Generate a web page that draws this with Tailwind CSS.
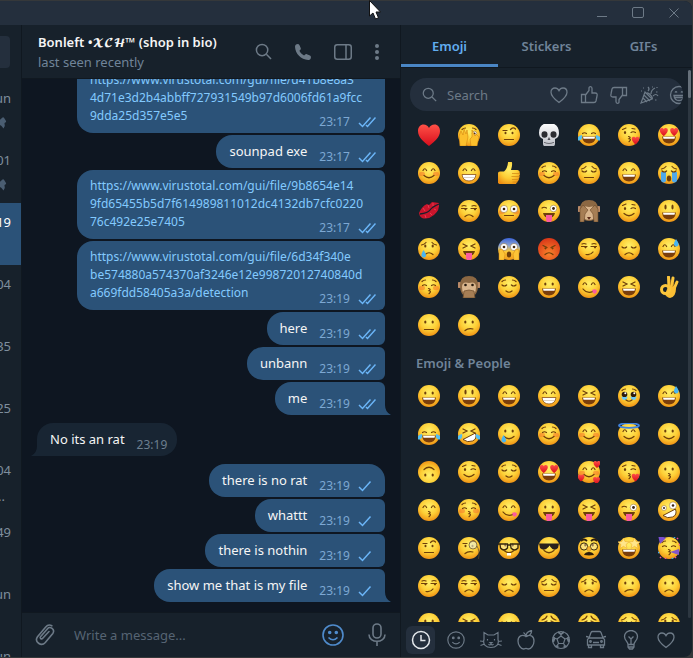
<!DOCTYPE html>
<html lang="en">
<head>
  <meta charset="UTF-8">
  <meta name="viewport" content="width=device-width, initial-scale=1.0">
  <title>Bonleft</title>
  <script src="https://cdn.jsdelivr.net/npm/@tailwindcss/browser@4"></script>
</head>
<body class="h-screen overflow-hidden bg-[#35383a] pt-px pr-px pb-px font-['Noto_Sans','Open_Sans',sans-serif] text-[13px] leading-[18px] text-[#f5f5f5]">

  <!-- shared shapes -->
  <svg width="0" height="0" class="absolute">
    <defs>
      <radialGradient id="skin" cx="50%" cy="35%" r="68%">
        <stop offset="0" stop-color="#fff06a"/>
        <stop offset=".55" stop-color="#fdce35"/>
        <stop offset="1" stop-color="#ee8d12"/>
      </radialGradient>
      <radialGradient id="rage" cx="50%" cy="70%" r="70%">
        <stop offset="0" stop-color="#f9832b"/>
        <stop offset="1" stop-color="#d93618"/>
      </radialGradient>
      <linearGradient id="scared" x1="0" y1="0" x2="0" y2="1">
        <stop offset="0" stop-color="#3b64d8"/>
        <stop offset=".35" stop-color="#8fa6d0"/>
        <stop offset=".6" stop-color="#fbc93a"/>
        <stop offset="1" stop-color="#f0981a"/>
      </linearGradient>
      <linearGradient id="red" x1="0" y1="0" x2="0" y2="1">
        <stop offset="0" stop-color="#ff5147"/>
        <stop offset="1" stop-color="#d80d1c"/>
      </linearGradient>
      <linearGradient id="bone" x1="0" y1="0" x2="0" y2="1">
        <stop offset="0" stop-color="#ffffff"/>
        <stop offset="1" stop-color="#b9bcc4"/>
      </linearGradient>
    </defs>
    <symbol id="check" viewBox="0 0 18 12"><path d="M1 7l3.500 3.500L12.500 1.500" fill="none" stroke="#6bb5f7" stroke-width="1.500"/></symbol>
    <symbol id="checks" viewBox="0 0 18 12"><path d="M1 7l3.500 3.500L12.500 1.500M8 9l1.500 1.500L17.500 1.500" fill="none" stroke="#6bb5f7" stroke-width="1.500"/></symbol>
    <symbol id="pin" viewBox="0 0 8 12"><path d="M0 3.500L3.500.5q1-.5 1.500.3l2 3.200q.4 1-.6 1.500L5.500 6l.3 3-1.300 2.500L2.500 9 0 7.500z" fill="#4a5d71"/></symbol>
    <symbol id="search" viewBox="0 0 18 18"><circle cx="7.500" cy="7.500" r="6"/><path d="M12 12l5 5"/></symbol>
    <symbol id="heart" viewBox="0 0 20 20"><path d="M10 17.500C6 14.500 2 11 2 7.200 2 4.500 3.800 3 6 3c1.800 0 3.200 1 4 2.600C10.800 4 12.200 3 14 3c2.200 0 4 1.500 4 4.200 0 3.800-4 7.300-8 10.300z"/></symbol>
    <symbol id="thumb" viewBox="0 0 20 20"><path d="M2.500 9.500h4v8h-4zM6.500 10l3.500-4.500V3c0-2 3-2 3 .5V8h3c2 0 2.500 1 2 3l-1 5c-.4 1.200-1 1.500-2 1.500H6.500"/></symbol>
    <symbol id="smile" viewBox="0 0 22 22"><circle cx="11" cy="11" r="10"/><path d="M6.500 13.500q4.500 4.500 9 0"/><circle cx="7.700" cy="8.500" r="1" fill="currentColor"/><circle cx="14.300" cy="8.500" r="1" fill="currentColor"/></symbol>
  </svg>

  <div class="flex h-full flex-col overflow-hidden rounded-tr-lg rounded-br-lg bg-[#17212b]">

    <!-- window title bar -->
    <header class="flex h-6 shrink-0 justify-end bg-[#242f3d] text-[#6d7a87]">
      <button class="flex w-9 items-center justify-center"><svg width="12" height="12" fill="none" stroke="currentColor"><path d="M1 9.500h10"/></svg></button>
      <button class="flex w-9 items-center justify-center"><svg width="12" height="12" fill="none" stroke="currentColor"><rect x=".5" y=".5" width="11" height="10" rx="1.500"/></svg></button>
      <button class="flex w-9 items-center justify-center"><svg width="12" height="12" fill="none" stroke="currentColor"><path d="M1.500 1.500l9 9M10.500 1.500l-9 9"/></svg></button>
    </header>

    <div class="flex min-h-0 flex-1">

      <!-- chat list -->
      <aside class="w-[22px] shrink-0 overflow-hidden border-r border-[#101820] text-[#7f8e9d]">
        <div class="flex h-[54px] items-start pt-[11px]"><div class="h-8 w-[10px] rounded-r bg-[#242f3d]"></div></div>
        <div class="flex h-[62px] flex-col items-end gap-[10px] py-[10px] pr-[10px]"><span>un</span><svg width="8" height="12" class="mr-1"><use href="#pin"/></svg></div>
        <div class="flex h-[62px] flex-col items-end gap-[10px] py-[10px] pr-[10px]"><span>01</span><svg width="8" height="12" class="mr-1"><use href="#pin"/></svg></div>
        <div class="flex h-[62px] flex-col items-end bg-[#2b5278] py-[10px] pr-[10px] text-white"><span>19</span></div>
        <div class="flex h-[62px] flex-col items-end py-[10px] pr-[10px]"><span>04</span></div>
        <div class="flex h-[62px] flex-col items-end py-[10px] pr-[10px]"><span>35</span></div>
        <div class="flex h-[62px] flex-col items-end py-[10px] pr-[10px]"><span>25</span></div>
        <div class="flex h-[62px] flex-col items-end gap-2 py-[10px] pr-[10px]"><span>04</span><span class="mr-[6px]">..</span></div>
        <div class="flex h-[62px] flex-col items-end py-[10px] pr-[10px]"><span>49</span></div>
        <div class="flex h-[62px] flex-col items-end py-[10px] pr-[10px]"><span>un</span></div>
        <div class="flex h-[62px] flex-col items-end py-[10px] pr-[10px]"><span>un</span></div>
      </aside>

      <!-- conversation -->
      <main class="flex min-w-0 flex-1 flex-col">
        <div class="flex h-[54px] shrink-0 items-center border-b border-[#101820] pr-[9px] pl-4 text-[#6d7a87]">
          <div class="min-w-0 flex-1 whitespace-nowrap">
            <h1 class="h-5 font-semibold text-[#f5f5f5]">Bonleft •<span class="font-['DejaVu_Math_TeX_Gyre','DejaVu_Sans',serif] text-[11px]">𝓧𝓒𝓗</span>™ (shop in bio)</h1>
            <p class="text-[#708499]">last seen recently</p>
          </div>
          <div class="flex items-center">
            <button class="flex w-10 justify-center"><svg width="17" height="17" fill="none" stroke="currentColor" stroke-width="1.600"><use href="#search"/></svg></button>
            <button class="flex w-10 justify-center"><svg width="18" height="18" viewBox="0 0 18 18" fill="currentColor"><path d="M2 1.500C3.500.7 4.800.8 5.400 2l1.300 3c.3.800.1 1.500-.5 2l-.8.8c1 2 2.600 3.600 4.700 4.700l.8-.8c.6-.6 1.300-.8 2-.5l3 1.300c1.200.6 1.400 2 .6 3.400-.5.800-1.300 1.200-2.300 1.100C7 16.500 1.300 11 1 3.800 1 2.800 1.300 2 2 1.500z"/></svg></button>
            <button class="flex w-10 justify-center"><svg width="18" height="16" fill="none" stroke="currentColor" stroke-width="1.500"><rect x=".75" y=".75" width="16.500" height="14.500" rx="2.500"/><path d="M12 1v14"/></svg></button>
            <button class="flex w-7 justify-center"><svg width="4" height="16" fill="currentColor"><circle cx="2" cy="2" r="2"/><circle cx="2" cy="8" r="2"/><circle cx="2" cy="14" r="2"/></svg></button>
          </div>
        </div>

        <div class="flex min-h-0 flex-1 flex-col items-end justify-end gap-[2px] overflow-hidden bg-[#0e1621] pr-[15px] pb-[10px] pl-[15px]">
          <div class="relative w-[308px] shrink-0 rounded-l-2xl rounded-r-md bg-[#2b5278] px-[13px] pt-[7px] pb-2">
            <a href="#" class="block text-xs leading-[18px] whitespace-nowrap text-[#83caff]">https://www.virustotal.com/gui/file/d41b8e8a3<br>4d71e3d2b4abbff727931549b97d6006fd61a9fcc<br>9dda25d357e5e5</a>
            <span class="absolute right-[9px] bottom-[2px] flex items-center gap-2 text-xs leading-[18px] text-[#7da8d3]">23:17 <svg width="18" height="12"><use href="#checks"/></svg></span>
          </div>
          <div class="flex h-[33px] shrink-0 items-end gap-3 rounded-l-2xl rounded-r-md bg-[#2b5278] pr-[9px] pl-[13px]">
            <p class="pb-2">sounpad exe</p>
            <span class="flex items-center gap-2 pb-[2px] text-xs leading-[18px] text-[#7da8d3]">23:17 <svg width="18" height="12"><use href="#checks"/></svg></span>
          </div>
          <div class="relative w-[308px] shrink-0 rounded-l-2xl rounded-r-md bg-[#2b5278] px-[13px] pt-[7px] pb-2">
            <a href="#" class="block text-xs leading-[18px] whitespace-nowrap text-[#83caff]">https://www.virustotal.com/gui/file/9b8654e14<br>9fd65455b5d7f614989811012dc4132db7cfc0220<br>76c492e25e7405</a>
            <span class="absolute right-[9px] bottom-[2px] flex items-center gap-2 text-xs leading-[18px] text-[#7da8d3]">23:17 <svg width="18" height="12"><use href="#checks"/></svg></span>
          </div>
          <div class="relative w-[308px] shrink-0 rounded-l-2xl rounded-r-md bg-[#2b5278] px-[13px] pt-[7px] pb-2">
            <a href="#" class="block text-xs leading-[18px] whitespace-nowrap text-[#83caff]">https://www.virustotal.com/gui/file/6d34f340e<br>be574880a574370af3246e12e99872012740840d<br>a669fdd58405a3a/detection</a>
            <span class="absolute right-[9px] bottom-[2px] flex items-center gap-2 text-xs leading-[18px] text-[#7da8d3]">23:19 <svg width="18" height="12"><use href="#checks"/></svg></span>
          </div>
          <div class="flex h-[33px] shrink-0 items-end gap-3 rounded-l-2xl rounded-r-md bg-[#2b5278] pr-[9px] pl-[13px]">
            <p class="pb-2">here</p>
            <span class="flex items-center gap-2 pb-[2px] text-xs leading-[18px] text-[#7da8d3]">23:19 <svg width="18" height="12"><use href="#checks"/></svg></span>
          </div>
          <div class="flex h-[33px] shrink-0 items-end gap-3 rounded-l-2xl rounded-r-md bg-[#2b5278] pr-[9px] pl-[13px]">
            <p class="pb-2">unbann</p>
            <span class="flex items-center gap-2 pb-[2px] text-xs leading-[18px] text-[#7da8d3]">23:19 <svg width="18" height="12"><use href="#checks"/></svg></span>
          </div>
          <div class="relative flex h-[33px] shrink-0 items-end gap-3 rounded-l-2xl rounded-tr-md bg-[#2b5278] pr-[9px] pl-[13px]">
            <p class="pb-2">me</p>
            <span class="flex items-center gap-2 pb-[2px] text-xs leading-[18px] text-[#7da8d3]">23:19 <svg width="18" height="12"><use href="#checks"/></svg></span>
            <svg width="6" height="10" class="absolute bottom-0 left-full" fill="#2b5278"><path d="M0 0q0 7 6 10H0z"/></svg>
          </div>

          <div class="relative my-[6px] flex h-[33px] shrink-0 items-end gap-3 self-start rounded-t-2xl rounded-br-2xl bg-[#182533] pr-[10px] pl-[13px]">
            <p class="pb-2">No its an rat</p>
            <span class="pb-[2px] text-xs leading-[18px] text-[#6d7f8f]">23:19</span>
            <svg width="6" height="10" class="absolute right-full bottom-0" fill="#182533"><path d="M6 0q0 7-6 10h6z"/></svg>
          </div>

          <div class="flex h-[33px] shrink-0 items-end gap-3 rounded-l-2xl rounded-tr-2xl rounded-br-md bg-[#2b5278] pr-[9px] pl-[13px]">
            <p class="pb-2">there is no rat</p>
            <span class="flex items-center gap-2 pb-[2px] text-xs leading-[18px] text-[#7da8d3]">23:19 <svg width="18" height="12"><use href="#check"/></svg></span>
          </div>
          <div class="flex h-[33px] shrink-0 items-end gap-3 rounded-l-2xl rounded-r-md bg-[#2b5278] pr-[9px] pl-[13px]">
            <p class="pb-2">whattt</p>
            <span class="flex items-center gap-2 pb-[2px] text-xs leading-[18px] text-[#7da8d3]">23:19 <svg width="18" height="12"><use href="#check"/></svg></span>
          </div>
          <div class="flex h-[33px] shrink-0 items-end gap-3 rounded-l-2xl rounded-r-md bg-[#2b5278] pr-[9px] pl-[13px]">
            <p class="pb-2">there is nothin</p>
            <span class="flex items-center gap-2 pb-[2px] text-xs leading-[18px] text-[#7da8d3]">23:19 <svg width="18" height="12"><use href="#check"/></svg></span>
          </div>
          <div class="relative flex h-[33px] shrink-0 items-end gap-3 rounded-l-2xl rounded-tr-md bg-[#2b5278] pr-[9px] pl-[13px]">
            <p class="pb-2">show me that is my file</p>
            <span class="flex items-center gap-2 pb-[2px] text-xs leading-[18px] text-[#7da8d3]">23:19 <svg width="18" height="12"><use href="#check"/></svg></span>
            <svg width="6" height="10" class="absolute bottom-0 left-full" fill="#2b5278"><path d="M0 0q0 7 6 10H0z"/></svg>
          </div>
        </div>

        <form class="flex h-[45px] shrink-0 items-center border-t border-[#101820] px-[13px] text-[#6d7a87]">
          <button type="button"><svg width="20" height="22" viewBox="0 0 20 22" fill="none" stroke="currentColor" stroke-width="1.600" stroke-linecap="round"><path d="M14 7.500l-6.500 7c-1 1.200-3-.4-2-1.800l7-8c2.400-2.800 8 .6 5.300 4.800l-7.500 9c-4 4.500-11.300-.5-7.800-5.800l8-9.500c1.600-1.900 4.300-2.600 6.300-1.400"/></svg></button>
          <input type="text" aria-label="Write a message..." placeholder="Write a message..." class="mx-[19px] min-w-0 flex-1 bg-transparent outline-none placeholder:text-[#566473]">
          <button type="button" class="mr-[23px] text-[#4f8bcc]"><svg width="22" height="22" fill="none" stroke="currentColor" stroke-width="1.600"><use href="#smile"/></svg></button>
          <button type="button"><svg width="20" height="24" viewBox="0 0 20 24" fill="none" stroke="currentColor" stroke-width="1.600"><rect x="6" y="1" width="8" height="14" rx="4"/><path d="M2 11.500c0 9 16 9 16 0M10 18.500V23"/></svg></button>
        </form>
      </main>

      <!-- emoji panel -->
      <section class="flex w-[292px] shrink-0 flex-col border-l border-[#101820]">
        <nav class="grid h-[43px] shrink-0 grid-cols-3 border-b border-[#101820] font-semibold text-[#708499]">
          <button class="border-b-[3px] border-[#4a86c5] pt-[2px] text-[#62aef0]">Emoji</button>
          <button>Stickers</button>
          <button>GIFs</button>
        </nav>

        <div class="relative min-h-0 flex-1 overflow-hidden">
          <div class="mx-[9px] mt-[10px] mb-[5px] flex h-[33px] items-center overflow-hidden rounded-2xl bg-[#242f3d] pl-3 text-[#6d7a87]">
            <svg width="15" height="15" fill="none" stroke="currentColor" stroke-width="1.500" class="shrink-0"><use href="#search"/></svg>
            <input type="text" aria-label="Search" placeholder="Search" class="mx-[10px] w-20 min-w-0 flex-1 bg-transparent outline-none placeholder:text-[#6d7a87]">
            <div class="flex w-[134px] shrink-0 gap-[10px] overflow-hidden">
              <button class="shrink-0"><svg width="20" height="20" fill="none" stroke="currentColor" stroke-width="1.300"><use href="#heart"/></svg></button>
              <button class="shrink-0"><svg width="20" height="20" fill="none" stroke="currentColor" stroke-width="1.300"><use href="#thumb"/></svg></button>
              <button class="shrink-0 rotate-180"><svg width="20" height="20" fill="none" stroke="currentColor" stroke-width="1.300"><use href="#thumb"/></svg></button>
              <button class="shrink-0"><svg width="20" height="20" fill="none" stroke="currentColor" stroke-width="1.200"><path d="M6 7l7 7-11 4zM5 10l6 6M4 13l4 4M8 8c1-1 7 5 5 6M9 6q2-2 0-4M12 9q0-4 4-6M14 11q3-3 5 0M4 3h1M13 2h1M17 7h1.500M16 15h1.500M2 6h1M18 2v1"/></svg></button>
              <button class="shrink-0"><svg width="20" height="20" viewBox="0 0 20 20" fill="none" stroke="currentColor" stroke-width="1.300"><circle cx="10" cy="10" r="8.500"/><path d="M5 10.500h10q-.5 5-5 5t-5-5zM6 12.500h8M6 7.500q1-1.500 2 0M12 7.500q1-1.500 2 0"/></svg></button>
            </div>
          </div>
          <div id="recent" class="ml-2 grid grid-cols-[repeat(7,40px)]"></div>
          <h2 class="flex h-[33px] items-center pt-1 pl-[15px] font-semibold text-[#708499]">Emoji &amp; People</h2>
          <div id="people" class="ml-2 grid grid-cols-[repeat(7,40px)]"></div>
          <!-- scrollbar -->
          <div class="absolute top-[2px] right-px bottom-1 w-[3px] rounded bg-[#2d3741]"><div class="h-7 rounded bg-[#66707a]"></div></div>
        </div>

        <footer class="flex h-[35px] shrink-0 items-center pl-[2px] text-[#6d7a87]">
          <button class="flex w-[35px] justify-center"><span class="flex h-7 w-[29px] items-center justify-center rounded-md bg-[#242f3d] text-[#e4e8ec]"><svg width="20" height="20" fill="none" stroke="currentColor" stroke-width="1.500"><circle cx="10" cy="10" r="8.500"/><path d="M10 5v5.500h4.500"/></svg></span></button>
          <button class="flex w-[35px] justify-center"><svg width="18" height="18" fill="none" stroke="currentColor" stroke-width="1.400"><use href="#smile"/></svg></button>
          <button class="flex w-[35px] justify-center"><svg width="22" height="20" fill="none" stroke="currentColor" stroke-width="1.200"><path d="M4 9.500V2.500l4 2.500h6l4-2.500v7c1.500 5-2 8-7 8s-8.500-3-7-8zM0 11l4 .5M.5 15.500l4-1.500M22 11l-4 .5M21.500 15.500l-4-1.500M10 12.500h2l-1 1zM8.500 14q1.500 2 2.500 0 1 2 2.500 0M7.500 9v1.500M14.500 9v1.500"/></svg></button>
          <button class="flex w-[35px] justify-center"><svg width="20" height="20" fill="none" stroke="currentColor" stroke-width="1.300"><path d="M10 6.500c-4-2.500-8-.5-8 4.500 0 4 3 8 5.500 8 1.500 0 1.500-.7 2.500-.7s1 .7 2.500.7c2.500 0 5.500-4 5.500-8 0-5-4-7-8-4.500zM10 6.500q0-5 5.500-6 .5 4.500-5.500 6zM10 6.500Q9.500 4 7.500 2.500"/></svg></button>
          <button class="flex w-[35px] justify-center"><svg width="20" height="20" fill="none" stroke="currentColor" stroke-width="1.200"><circle cx="10" cy="10" r="8.500"/><path d="M10 6l4 3-1.500 4.500h-5L6 9zM10 6V3.500M14 9l3-1M12.500 13.500l2 3M7.500 13.500l-2 3M6 9L3 8"/><path d="M7 2l3 2 3-2M18 7l-1.500 1.500L18 12M2 7l1.500 1.500L2 12M4.500 16.500l3 0M12.500 16.500h3" stroke-width="2"/></svg></button>
          <button class="flex w-[35px] justify-center"><svg width="20" height="20" fill="none" stroke="currentColor" stroke-width="1.300"><path d="M3 8l2-5.500q.5-1 1.500-1h7q1 0 1.500 1L17 8l1.500 1.500V15h-17V9.500zM3 8h14M2.500 15v2.500h3V15M14.500 15v2.500h3V15M7 12.500h6M0 6.500l2.500.5M20 6.500l-2.500.5"/><circle cx="4.500" cy="11.500" r=".8"/><circle cx="15.500" cy="11.500" r=".8"/></svg></button>
          <button class="flex w-[35px] justify-center"><svg width="20" height="20" fill="none" stroke="currentColor" stroke-width="1.300"><path d="M7 14.500c0-3-3.500-4-3.500-8a6.500 6 0 0 1 13 0c0 4-3.500 5-3.500 8zM7 14.500V17l1.500 2h3l1.500-2v-2.500M7 17h6M10 14.500V9L7.500 6.500M10 9l2.500-2.500"/></svg></button>
          <button class="flex w-[35px] justify-center"><svg width="20" height="20" fill="none" stroke="currentColor" stroke-width="1.300"><use href="#heart"/></svg></button>
        </footer>
      </section>
    </div>
  </div>

  <svg width="12" height="20" viewBox="0 0 12 20" class="absolute top-0 left-[369px]"><path d="M.5.500v15.500l3.500-3 2.500 6 3-1.200-2.500-5.800h4.500z" fill="#fff" stroke="#111"/></svg>

  <script>
    const line = d => `<path d="${d}" fill="none" stroke="#6e3f0a" stroke-width="1.200" stroke-linecap="round"/>`;
    const heart = (x, y, s) => `<path transform="translate(${x} ${y}) scale(${s})" d="M0 8C-4 5-9-1-6-5c2-2 5-1 6 1 1-2 4-3 6-1 3 4-2 10-6 13z" fill="url(#red)"/>`;
    const eye = (x, y, r, p) => `<circle cx="${x}" cy="${y}" r="${r}" fill="#fff" stroke="#8a642a" stroke-width=".5"/><circle cx="${x}" cy="${y}" r="${p}" fill="#3c2411"/>`;

    // each emoji is a stack of these parts
    const parts = {
      face: '<circle cx="11" cy="11" r="11" fill="url(#skin)"/>',
      rage: '<circle cx="11" cy="11" r="11" fill="url(#rage)"/>',
      blue: '<circle cx="11" cy="11" r="11" fill="url(#scared)"/>',
      cheeks: '<ellipse cx="4" cy="12" rx="3" ry="2.200" fill="#f4652b" opacity=".45"/><ellipse cx="18" cy="12" rx="3" ry="2.200" fill="#f4652b" opacity=".45"/>',
      dots: '<ellipse cx="7.300" cy="8" rx="1.100" ry="1.500" fill="#6e3f0a"/><ellipse cx="14.700" cy="8" rx="1.100" ry="1.500" fill="#6e3f0a"/>',
      tall: '<ellipse cx="7.500" cy="7" rx="1.100" ry="2.500" fill="#6e3f0a"/><ellipse cx="14.500" cy="7" rx="1.100" ry="2.500" fill="#6e3f0a"/>',
      arch: line('M5 8.500q1.800-3.500 3.600 0M13.400 8.500q1.800-3.500 3.600 0'),
      soft: line('M4.500 9.500q2-1.500 4 0M13.500 9.500q2-1.500 4 0'),
      closed: line('M4 9q2.300 2 4.600 0M13.400 9q2.300 2 4.600 0'),
      brows: line('M4 5.500q1.500-1.500 3.500-1.500M18 5.500q-1.500-1.500-3.500-1.500'),
      sadBrows: line('M3.500 7q3-.5 4.500-2.500M18.500 7q-3-.5-4.500-2.500'),
      mad: line('M5 7.500l4 2M17 7.500l-4 2') + '<circle cx="7.500" cy="10.300" r="1.100" fill="#6e3f0a"/><circle cx="14.500" cy="10.300" r="1.100" fill="#6e3f0a"/>',
      squint: line('M5 6l4 2-4 2M17 6l-4 2 4 2'),
      wrinkle: line('M4 7q4-1 5-4M18 7q-4-1-5-4M5 10l4-2M17 10l-4-2'),
      wink: '<ellipse cx="7" cy="8.500" rx="1.100" ry="1.500" fill="#6e3f0a"/>' + line('M13 8.500q2-1.500 4.500 0M4.500 5.500l3.500-1.500M14 4.500l3 .5'),
      side: line('M3.500 8.500h5.500M13 8.500h5.500M4 6q2-1 4 0M14 6q2-1 4 0') + '<circle cx="7.500" cy="9.300" r="1.100" fill="#6e3f0a"/><circle cx="17" cy="9.300" r="1.100" fill="#6e3f0a"/>',
      raised: '<ellipse cx="7.500" cy="9" rx="1" ry="1.300" fill="#6e3f0a"/><ellipse cx="14.500" cy="9" rx="1" ry="1.300" fill="#6e3f0a"/>' + line('M5 6.500h4M12.500 5.500q2.500-3 5-.5'),
      hearts: heart(5.800, 7.500, .58) + heart(16.200, 7.500, .58),
      big: eye(6, 9, 3.600, 1.300) + eye(16, 9, 3.600, 1.300),
      tears2: '<circle cx="6.500" cy="9.500" r="2.800" fill="#2c1a0c"/><circle cx="15.500" cy="9.500" r="2.800" fill="#2c1a0c"/><path d="M3.500 11.500q3 1 6 0-.5 3.500-3 3.500t-3-3.500M12.500 11.500q3 1 6 0-.5 3.500-3 3.500t-3-3.500" fill="#6cc9f5"/><circle cx="7.300" cy="8.300" r="1" fill="#fff"/><circle cx="16.300" cy="8.300" r="1" fill="#fff"/>',
      crazy: eye(15, 6.500, 3.600, 1.300) + eye(6, 9, 2.500, 1),
      winkBig: line('M4 8q2-1.500 4.500 0') + eye(15.500, 8.500, 3.300, 1.400),
      peek: eye(16.500, 9.500, 2.300, 1.100),
      stars: '<path d="M5.500 1l1.500 3.500 4 .3-3 2.700 1 4-3.500-2.200L2 11.500l1-4-3.500-2.700 4.300-.3zM16.500 1L15 4.500l-4 .3 3 2.700-1 4 3.500-2.200 3.500 2.200-1-4 3.500-2.700-4.300-.3z" fill="#ffe68a" stroke="#e9a62a" stroke-width=".5"/>',
      open: '<path d="M4 12.500h14q-.8 7-7 7t-7-7z" fill="#7b3e0b"/><path d="M5 12.700h12l-.5 2h-11z" fill="#fff"/>',
      teeth: '<path d="M4 12.500h14q-.8 6.500-7 6.500t-7-6.500z" fill="#fff" stroke="#8b5118" stroke-width=".8"/><path d="M5 15.500h12" stroke="#b9a58c" stroke-width=".5"/>',
      tilt: '<path d="M5 16.500L17.500 10q2 6-3 8t-9.500-1.500z" fill="#fff" stroke="#6e3f0a"/>',
      smile: line('M6 13.500q5 4.500 10 0'),
      little: line('M8 15q3 2.500 6 0'),
      flat: line('M6.500 15.500h9'),
      frown: line('M7 16.500q4-3.500 8 0'),
      slant: line('M7 16.500q3-2.500 8-1.500'),
      smirk: line('M8 16.500q4.500 1 7-2.500'),
      kiss: line('M10.500 12.500q3 .5.500 2.200 3 .8 0 3'),
      tongue: '<path d="M5 13h12q-1 5-6 5t-6-5z" fill="#6e3f0a"/><path d="M8 15h6v4.500c0 4-6 4-6 0z" fill="#fb5b9c"/>',
      yum: line('M5 13q4 5 10 2.500') + '<path d="M14 14q4-2 5 1-1 4-4 2z" fill="#fb5b9c"/>',
      oh: '<ellipse cx="11" cy="16.500" rx="2.200" ry="3" fill="#6e3f0a"/>',
      tearsOut: '<path d="M4 11q1 5-3 5.500-3 0-2-2.500Q1 11.500 4 11zM18 11q-1 5 3 5.500 3 0 2-2.500-2-2.500-5-3z" fill="#54bff2"/>',
      streams: '<path d="M3 10h5v9q-2 3-5 0zM14 10h5v9q-3 3-5 0z" fill="#4fa9ea"/>',
      tear: '<path d="M5.500 12q3 4 2.500 6-2 3-4.500 0-.5-2 2-6z" fill="#49b5f1"/>',
      sweat: '<path d="M18 1q3 4 2.500 6-2 3-4.500 0Q15.500 5 18 1z" fill="#49b5f1"/>',
      kissHeart: heart(17.500, 16, .55),
      love: heart(19, 3, .5) + heart(3, 16.500, .5) + heart(18.500, 19, .5),
      halo: '<ellipse cx="11" cy="2.500" rx="10" ry="2.300" fill="none" stroke="#3f83dd" stroke-width="1.800"/>',
      hands: '<path d="M1 12l2-5 2 4 1-6 2 5 1-4 1 7-2 9H2zM21 13l-3-3-1 2-3-6v7l-2 2 1 7h6z" fill="#fcbf2c" stroke="#d58713" stroke-width=".6"/>',
      palms: '<path d="M1 12l3-1 3 5-1 6H1zM21 12l-3-1-3 5 1 6h5z" fill="#fcc437" stroke="#d58713" stroke-width=".5"/>',
      glasses: '<path d="M2 7h7.500v4q-3.500 4-7 0zM12.500 7H20v4q-3.500 4-7 0zM9.500 8h3M0 7h2M20 7h2" fill="#fff" fill-opacity=".3" stroke="#35270e" stroke-width="1.300"/>',
      shades: '<path d="M1 6.500h20l-1 4.500q-4 4-7.500-1l-1-1.500-1 1.500Q6 15 2 11z" fill="#28221e"/>',
      nerd: '<path d="M9 16h4v2.500H9z" fill="#fff"/>',
      monocle: '<circle cx="15" cy="8" r="4" fill="#e9f0dc" fill-opacity=".6" stroke="#8a7342"/><path d="M19 9q3 5 1.500 13" fill="none" stroke="#5c4a2a" stroke-width=".7"/>',
      disguise: '<path d="M3 4q3-3 6 0M13 4q3-3 6 0" fill="none" stroke="#2d1d0d" stroke-width="1.800"/><circle cx="6" cy="9.500" r="3.600" fill="#fff" fill-opacity=".3" stroke="#35270e"/><circle cx="16" cy="9.500" r="3.600" fill="#fff" fill-opacity=".3" stroke="#35270e"/><ellipse cx="11" cy="12" rx="1.800" ry="2.500" fill="#f5b332" stroke="#c47c14" stroke-width=".5"/><path d="M6 18q1-3 5-3t5 3q-5 .8-10 0z" fill="#2d1d0d"/>',
      party: '<path d="M0-2l8 3-6 6z" fill="#7a4fd0"/><path d="M12 15l9-3v6z" fill="#8358c9"/><path d="M2 20l1 1M19 2l1-1M21 7l1 1M7 22l1-1M17 20l1 1M13-1h1" stroke="#e94f9c" stroke-width="1.600"/><path d="M0 15l1 1M16 0l1 1M14 21l1 1" stroke="#41a6e8" stroke-width="1.600"/>',
      monkey: '<circle cx="1.500" cy="9" r="3" fill="#b98a68"/><circle cx="20.500" cy="9" r="3" fill="#b98a68"/><path d="M2 9q0-9 9-9t9 9q0 12-9 12T2 9z" fill="#8c6843"/><path d="M4 11q0-6 7-4 7-2 7 4 0 9-7 9t-7-9z" fill="#d9b58d"/>',
      monkeyEyes: '<circle cx="7.500" cy="9" r="1.300" fill="#26190e"/><circle cx="14.500" cy="9" r="1.300" fill="#26190e"/>',
      cover: '<path d="M2 9l3-4 5 5-3 4-1 8H2zM20 9l-3-4-5 5 3 4 1 8h4z" fill="#a67e55" stroke="#6b4a2a" stroke-width=".6"/><path d="M9 17h4l-2 3z" fill="#5a2c1a"/>',
      hush: '<path d="M5 22l1-7 5-1 5 1 1 7z" fill="#a67e55" stroke="#6b4a2a" stroke-width=".7"/>',
      redHeart: '<path d="M11 22C5 17.500 0 13 0 7 0 3 2.500.500 5.500.500 8 .500 10 2 11 4c1-2 3-3.500 5.500-3.500C19.500.500 22 3 22 7c0 6-5 10.500-11 15z" fill="url(#red)"/>',
      skull: '<path d="M11-1C4-1 1 3 1 9c0 3 1 5 4 6v5q0 3 6 3t6-3v-5c3-1 4-3 4-6 0-6-3-10-10-10z" fill="url(#bone)"/><ellipse cx="6.500" cy="10.500" rx="3" ry="3.200" fill="#2b2c31"/><ellipse cx="15.500" cy="10.500" rx="3" ry="3.200" fill="#2b2c31"/><path d="M11 13l-1.500 3h3zM6 18q5 2 10 0v.7q-5 2-10 0z" fill="#4a4b52"/>',
      thumbUp: '<path d="M0 11q0-1.500 2-1.500h4q3.500-3 4-9 .3-2.500 2.500-2 3 1.500.5 9.500h6.500q3 .5 2 3 1 1.500-.3 3 .8 1.700-.7 3 .5 2-1.500 3-1 3-4 3H7q-5 0-7-2z" fill="url(#skin)"/><path d="M14 11.500h8M13.500 14.500h8M14 17.500h7M14.500 20h5" stroke="#d48b18" stroke-width=".8"/>',
      lips: '<path d="M1 13q3-7 8-9l2 1 3-3 7 1q1 7-5 12t-12 3q-3-2-3-5z" fill="#c9152c"/><path d="M2 14q8-1 10-4t9-6" fill="none" stroke="#17212b" stroke-width="1.300"/><path d="M5 8l2 3M10 5l1 3M15 3v3M7 15l1 3M12 13l2 2M16 9l2 1" stroke="#ef4158" stroke-width=".8"/>',
      okHand: '<path d="M11 12L10.500 1M13.500 12L15 2M15.500 14L19 6" stroke="#fcc63c" stroke-width="3" stroke-linecap="round"/><path d="M10 11q5-3 8 1 0 9-6 10-4-1-5-4z" fill="#fbbe34"/><circle cx="7.500" cy="13.500" r="4" fill="none" stroke="#fcc63c" stroke-width="3"/><path d="M12.300 3.500v6M16 6l-1.500 5" stroke="#d48b18" stroke-width=".6"/>'
    };

    const emoji = {
      '❤️': 'redHeart', '🫣': 'face brows peek hands', '🤨': 'face raised flat', '💀': 'skull',
      '😂': 'face soft open tearsOut', '😘': 'face wink kiss kissHeart', '😍': 'face hearts open',
      '😊': 'face cheeks arch smile', '😁': 'face arch teeth', '👍': 'thumbUp', '☺️': 'face cheeks brows soft smile',
      '😔': 'face sadBrows closed flat', '😄': 'face arch open', '😭': 'face sadBrows streams closed oh',
      '💋': 'lips', '😒': 'face side frown', '😳': 'face cheeks big flat', '😜': 'face winkBig tongue',
      '🙈': 'monkey cover', '😉': 'face wink smile', '😃': 'face tall open', '😢': 'face sadBrows dots frown tear',
      '😝': 'face squint tongue', '😱': 'blue big oh palms', '😡': 'rage mad frown', '😏': 'face side smirk',
      '😞': 'face closed frown', '😅': 'face arch open sweat', '😚': 'face cheeks brows soft kiss',
      '🙊': 'monkey monkeyEyes hush', '😌': 'face brows closed little', '😀': 'face dots open', '😋': 'face arch yum',
      '😆': 'face squint open', '👌': 'okHand', '😐': 'face dots flat', '😕': 'face dots slant',
      '🥹': 'face brows tears2 little', '🤣': 'face squint tilt tearsOut', '🥲': 'face dots smile tear',
      '😇': 'face arch smile halo', '🙂': 'face dots smile', '🙃': 'face dots smile',
      '🥰': 'face cheeks arch smile love', '😗': 'face dots kiss', '😙': 'face arch kiss', '😛': 'face dots tongue',
      '🤪': 'face crazy tilt', '🧐': 'face raised monocle slant', '🤓': 'face dots glasses smile nerd',
      '😎': 'face shades smile', '🥸': 'face dots disguise', '🤩': 'face stars open',
      '🥳': 'face brows soft kiss party', '😟': 'face sadBrows dots frown', '🙁': 'face dots frown',
      '☹️': 'face dots frown', '😣': 'face squint frown', '😖': 'face wrinkle frown', '😫': 'face wrinkle oh',
      '😩': 'face sadBrows closed oh', '🥺': 'face sadBrows dots little'
    };

    const recent = '❤️ 🫣 🤨 💀 😂 😘 😍 😊 😁 👍 ☺️ 😔 😄 😭 💋 😒 😳 😜 🙈 😉 😃 😢 😝 😱 😡 😏 😞 😅 😚 🙊 😌 😀 😋 😆 👌 😐 😕';
    const people = '😀 😃 😄 😁 😆 🥹 😅 😂 🤣 🥲 ☺️ 😊 😇 🙂 🙃 😉 😌 😍 🥰 😘 😗 😙 😚 😋 😛 😝 😜 🤪 🤨 🧐 🤓 😎 🥸 🤩 🥳 😏 😒 😞 😔 😟 😕 🙁 ☹️ 😣 😞 😖 😫 😩 🥺';

    function fill(id, list) {
      document.getElementById(id).innerHTML = list.split(' ').map(e => `
        <button class="flex h-[38px] items-center justify-center" aria-label="${e}">
          <svg width="22" height="22" viewBox="0 0 22 22" class="overflow-visible${e === '🙃' ? ' rotate-180' : ''}">${emoji[e].split(' ').map(p => parts[p]).join('')}</svg>
        </button>`).join('');
    }

    fill('recent', recent);
    fill('people', people);
  </script>
</body>
</html>
